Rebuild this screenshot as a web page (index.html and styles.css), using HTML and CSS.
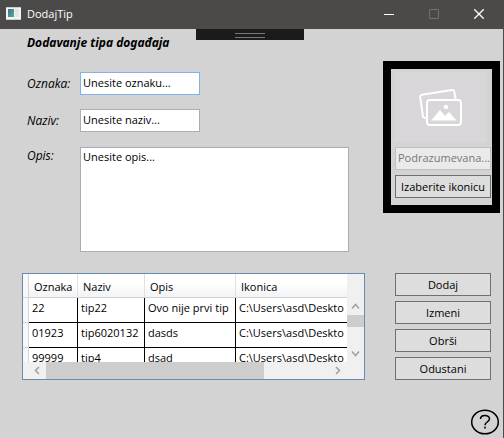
FILE: index.html
```html
<!DOCTYPE html>
<html lang="sr-Latn">
<head>
<meta charset="utf-8">
<meta name="viewport" content="width=device-width, initial-scale=1">
<title>DodajTip</title>
<link rel="stylesheet" href="styles.css">
</head>
<body>
<div class="window">
  <header class="titlebar">
    <svg class="app-icon" viewBox="0 0 15 13" aria-hidden="true">
      <defs>
        <linearGradient id="pane" x1="0" y1="0" x2="1" y2="1"><stop offset="0" stop-color="#3c6fae"/><stop offset="1" stop-color="#58b078"/></linearGradient>
      </defs>
      <path fill="#f4f4f4" d="M0 0h15v13H0z"/>
      <path fill="#c9ccd0" d="M0 0h15v1H0zM0 12h15v1H0z"/>
      <path fill="url(#pane)" d="M2 2h6v8H2z"/>
      <path fill="#dfe6e6" d="M9 2h4v8H9z"/>
    </svg>
    <span class="caption">DodajTip</span>
    <div class="window-controls">
      <button type="button" class="control" aria-label="Minimize"><svg viewBox="0 0 10 10"><path d="M0 5.5h10" stroke="#fff"/></svg></button>
      <button type="button" class="control" aria-label="Maximize" disabled><svg viewBox="0 0 10 10"><path d="M.5.5h9v9h-9z" fill="none" stroke="#72716f"/></svg></button>
      <button type="button" class="control" aria-label="Close"><svg viewBox="0 0 10 10"><path d="M.3.3l9.4 9.4M9.7.3L.3 9.7" stroke="#fff" stroke-width="1.3"/></svg></button>
    </div>
  </header>
  <main class="content">
    <div class="grip"></div>
    <div class="top">
      <form class="details">
        <h1>Dodavanje tipa događaja</h1>
        <label for="oznaka">Oznaka:</label>
        <input id="oznaka" class="field active" type="text" value="Unesite oznaku...">
        <label for="naziv">Naziv:</label>
        <input id="naziv" class="field" type="text" value="Unesite naziv...">
        <label for="opis">Opis:</label>
        <textarea id="opis" class="field area">Unesite opis...</textarea>
      </form>
      <section class="picker">
        <div class="preview">
          <svg viewBox="0 0 44 38" fill="none" stroke="#fff" stroke-width="2" aria-hidden="true">
            <path d="M7 30l-1.500-.2a2 2 0 0 1-1.600-1.700L1.200 9a2 2 0 0 1 1.700-2.300L33 2a2 2 0 0 1 2.300 1.700L36.500 11"/>
            <rect x="8" y="12" width="34" height="25" rx="3"/>
            <path d="M12 32.500L21 22l5 6 4-4 7.500 8.500z" fill="#fff" stroke="none"/>
            <circle cx="27" cy="19" r="2.300" fill="#fff" stroke="none"/>
          </svg>
        </div>
        <input class="field path" type="text" value="Podrazumevana..." aria-label="Ikonica" disabled>
        <button type="button" class="button">Izaberite ikonicu</button>
      </section>
    </div>
    <div class="bottom">
      <div class="grid-box">
        <div class="viewport">
          <table>
            <colgroup><col class="c-head"><col class="c-oznaka"><col class="c-naziv"><col class="c-opis"><col class="c-ikonica"></colgroup>
            <thead><tr><th></th><th>Oznaka</th><th>Naziv</th><th>Opis</th><th>Ikonica</th></tr></thead>
            <tbody>
              <tr><td></td><td>22</td><td>tip22</td><td>Ovo nije prvi tip</td><td>C:\Users\asd\Deskto</td></tr>
              <tr><td></td><td>01923</td><td>tip6020132</td><td>dasds</td><td>C:\Users\asd\Deskto</td></tr>
              <tr><td></td><td>99999</td><td>tip4</td><td>dsad</td><td>C:\Users\asd\Deskto</td></tr>
            </tbody>
          </table>
        </div>
        <div class="vscroll">
          <svg class="arrow" viewBox="0 0 17 17"><path d="M5 10.500l3.500-4 3.500 4"/></svg>
          <div class="vthumb"></div>
          <svg class="arrow" viewBox="0 0 17 17"><path d="M5 6.500l3.500 4 3.500-4"/></svg>
        </div>
        <div class="hscroll">
          <svg class="arrow" viewBox="0 0 17 17"><path d="M10 5L6.500 8.500 10 12"/></svg>
          <div class="htrack"><div class="hthumb"></div></div>
          <svg class="arrow" viewBox="0 0 17 17"><path d="M7 5l3.500 3.500L7 12"/></svg>
        </div>
      </div>
      <div class="actions">
        <button type="button" class="button">Dodaj</button>
        <button type="button" class="button">Izmeni</button>
        <button type="button" class="button">Obrši</button>
        <button type="button" class="button">Odustani</button>
      </div>
    </div>
    <footer>
      <button type="button" class="help" aria-label="Pomoć">
        <svg viewBox="0 0 30 26" fill="none" stroke="#000" aria-hidden="true">
          <ellipse cx="15" cy="13" rx="13.300" ry="11.800" stroke-width="1.500"/>
          <path d="M10.500 10C10.500 5.300 19.500 5.300 19.500 9.800c0 3.200-4.500 3.200-4.500 6.400" stroke-width="1.500"/>
          <path d="M15 17.800v1.700" stroke-width="1.700"/>
        </svg>
      </button>
    </footer>
  </main>
</div>
</body>
</html>
```
FILE: styles.css
```css
* { box-sizing: border-box; }

body {
  margin: 0;
  background: #d3d3d3;
  color: #000;
  font: 11px/16px "Open Sans", "Noto Sans", sans-serif;
}

button, input, textarea { font: inherit; color: inherit; margin: 0; }

.window { min-height: 100vh; display: flex; flex-direction: column; }

.titlebar {
  display: flex;
  align-items: center;
  height: 29px;
  padding: 0 3px 2px 6px;
  background: #4c4a48;
  color: #fff;
}
.app-icon { width: 15px; height: 13px; margin-right: 6px; }
.caption { flex: 1; }
.window-controls { display: flex; }
.control {
  display: grid;
  place-items: center;
  width: 45px;
  height: 26px;
  padding: 0;
  border: 0;
  background: none;
}
.control svg { width: 10px; height: 10px; }

.content {
  position: relative;
  flex: 1;
  display: flex;
  flex-direction: column;
  border-right: 1px solid #4c4a48;
}
.grip {
  position: absolute;
  top: 0;
  left: 50%;
  width: 108px;
  height: 11px;
  margin-left: -56px;
  padding-top: 4px;
  background: #1b1b1b;
}
.grip::before {
  content: "";
  display: block;
  width: 30px;
  height: 3px;
  margin: 0 auto;
  border: solid #777;
  border-width: 1px 0;
}

.top { display: flex; align-items: flex-start; gap: 34px; padding: 5px 3px 0 27px; }
.details {
  flex: 1;
  display: grid;
  grid-template-columns: 53px 1fr;
  row-gap: 14px;
}
.details h1 {
  grid-column: 1 / -1;
  margin: 0 0 6px;
  font: italic 700 12px/18px "Noto Sans", "Open Sans", sans-serif;
}
.details label { font-size: 12px; font-style: italic; padding-top: 4px; line-height: 16px; }
.details label[for="opis"] { padding-top: 2px; }

.field {
  width: 120px;
  height: 23px;
  padding: 0 2px 2px;
  border: 1px solid #abadb3;
  border-radius: 0;
  outline: 0;
  background: #fff;
}
.field.active { border-color: #7eb4ea; }
.field.area { width: 100%; height: 105px; margin-top: 1px; padding: 1px 2px; resize: none; overflow: hidden; display: block; }

.picker {
  width: 117px;
  margin-top: 27px;
  padding: 3px 1px 7px 4px;
  border: 8px solid #000;
}
.preview {
  display: grid;
  place-items: center;
  height: 70px;
  margin: 0 4px 5px 0;
  background: #d8d6d9;
}
.preview svg { width: 44px; height: 38px; }
.field.path {
  display: block;
  width: 100%;
  margin-bottom: 5px;
  padding-right: 0;
  border-color: #bfc0c2;
  background: #eaeaea;
  color: #777;
}

.button {
  display: block;
  width: 100%;
  height: 23px;
  padding: 0;
  border: 1px solid #707070;
  border-radius: 0;
  background: #ddd;
  white-space: nowrap;
}

.bottom { display: flex; align-items: flex-start; gap: 30px; padding: 21px 12px 0 22px; }
.grid-box {
  flex: 1;
  min-width: 0;
  display: grid;
  grid-template-columns: minmax(0, 1fr) 17px;
  grid-template-rows: 88px 17px;
  border: 1px solid #688caf;
  background: #f0f0f0;
}
.viewport { overflow: hidden; background: #fff; }
table { width: 440px; table-layout: fixed; border-collapse: separate; border-spacing: 0; }
.c-head { width: 6px; }
.c-oznaka { width: 49px; }
.c-naziv { width: 67px; }
.c-opis { width: 91px; }
th {
  height: 24px;
  padding: 2px 0 0 5px;
  border-right: 1px solid #dfe0e1;
  border-bottom: 1px solid #d0d1d2;
  background: linear-gradient(#fff 40%, #f2f3f5);
  font-weight: 400;
  text-align: left;
}
td {
  height: 25px;
  padding: 2px 0 0 3px;
  border-right: 1px solid #000;
  border-bottom: 1px solid #000;
  vertical-align: top;
  white-space: nowrap;
}
th:first-child, td:first-child { padding: 0; border-color: #d5d5d5; background: #f8f8f8; }

.arrow { width: 17px; height: 17px; fill: none; stroke: #a0a0a0; stroke-width: 1.5; flex: none; }
.vscroll { display: flex; flex-direction: column; padding-top: 24px; }
.vthumb { height: 12px; margin-bottom: auto; background: #cdcdcd; }
.hscroll { display: flex; padding: 0 1px 0 6px; }
.htrack { flex: 1; }
.hthumb { width: 77%; height: 17px; background: #cdcdcd; }

.actions { width: 96px; display: grid; gap: 5px; }

footer { display: flex; justify-content: flex-end; margin-top: auto; padding: 0 3px 3px 0; }
.help { width: 30px; height: 26px; padding: 0; border: 0; background: none; }
.help svg { display: block; width: 30px; height: 26px; }
```
